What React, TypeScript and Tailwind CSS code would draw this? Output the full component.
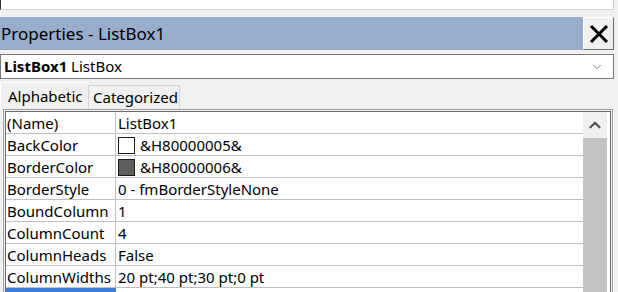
import { ChevronDown, ChevronUp } from "lucide-react";

type Prop = {
  name: string;
  value: string;
  swatch?: string;
};

const props: Prop[] = [
  { name: "(Name)", value: "ListBox1" },
  { name: "BackColor", value: "&H80000005&", swatch: "bg-white" },
  { name: "BorderColor", value: "&H80000006&", swatch: "bg-[#5f5f5f]" },
  { name: "BorderStyle", value: "0 - fmBorderStyleNone" },
  { name: "BoundColumn", value: "1" },
  { name: "ColumnCount", value: "4" },
  { name: "ColumnHeads", value: "False" },
  { name: "ColumnWidths", value: "20 pt;40 pt;30 pt;0 pt" },
];

const PropRow = ({ prop }: { prop: Prop }) => (
  <div className="flex h-[22px] border-b border-[#c0c0c0]">
    <div className="w-[110px] shrink-0 border-r border-[#c0c0c0] pt-[1px] pl-[1px] leading-[21px]">
      {prop.name}
    </div>
    <div className="flex items-center pt-[1px] pl-[2px] leading-[21px]">
      {prop.swatch && (
        <span
          className={`mr-[5px] h-[17px] w-[17px] border border-[#1a1a1a] ${prop.swatch}`}
        />
      )}
      {prop.value}
    </div>
  </div>
);

const App = () => {
  return (
    <div
      className="relative h-[292px] w-[618px] overflow-hidden bg-[#f0f0f0] text-[15px] text-black"
      style={{ fontFamily: '"Noto Sans", "Open Sans", sans-serif' }}
    >
      {/* top strip of the editor window */}
      <div className="h-[10px] w-[614px] border-r border-b border-l border-r-[#d4d4d4] border-b-[#d4d4d4] border-l-[#333] bg-white" />

      {/* title bar */}
      <div className="mt-[7px] flex h-[33px] w-[614px]">
        <div className="flex flex-1 items-center bg-[#97adcb] pb-[1px] pl-[1px] text-[17px] leading-none">
          Properties - ListBox1
        </div>
        <button className="flex w-[31px] items-center justify-center border border-t-white border-l-white border-r-[#6b6b6b] border-b-[#6b6b6b] bg-[#f0f0f0]">
          <svg width="20" height="20" viewBox="0 0 20 20">
            <path d="M2 2 L18 18 M18 2 L2 18" stroke="#000" strokeWidth="3" />
          </svg>
        </button>
      </div>

      {/* object selector */}
      <div className="mt-[4px] flex h-[25px] w-[614px] items-center justify-between border border-[#7a7a7a] bg-white pr-[9px] pl-[3px]">
        <div className="leading-none">
          <span className="font-bold">ListBox1</span> ListBox
        </div>
        <ChevronDown size={14} strokeWidth={1.25} color="#555" />
      </div>

      {/* tabs */}
      <div className="mt-[3px] flex h-[27px] items-end">
        <div className="flex h-[27px] w-[88px] items-center border-t border-l border-white pl-[7px]">
          Alphabetic
        </div>
        <div className="flex h-[24px] w-[92px] items-center border-t border-r border-l border-[#d2d2d2] pl-[4px]">
          Categorized
        </div>
      </div>

      {/* property grid */}
      <div className="ml-[3px] w-[610px] border border-[#a0a0a0] p-[1px]">
        <div className="flex h-[200px] border border-[#6b6b6b] bg-white">
          <div className="w-[577px]">
            {props.map((p) => (
              <PropRow key={p.name} prop={p} />
            ))}
            <div className="flex h-[22px]">
              <div className="w-[110px] bg-[#3b7dd8]" />
            </div>
          </div>
          <div className="flex w-[24px] flex-col bg-[#f0f0f0]">
            <div className="flex h-[26px] items-center justify-center">
              <ChevronUp size={18} strokeWidth={3} color="#555" />
            </div>
            <div className="flex-1 bg-[#c3c3c3]" />
          </div>
        </div>
      </div>
    </div>
  );
};

export default App;
